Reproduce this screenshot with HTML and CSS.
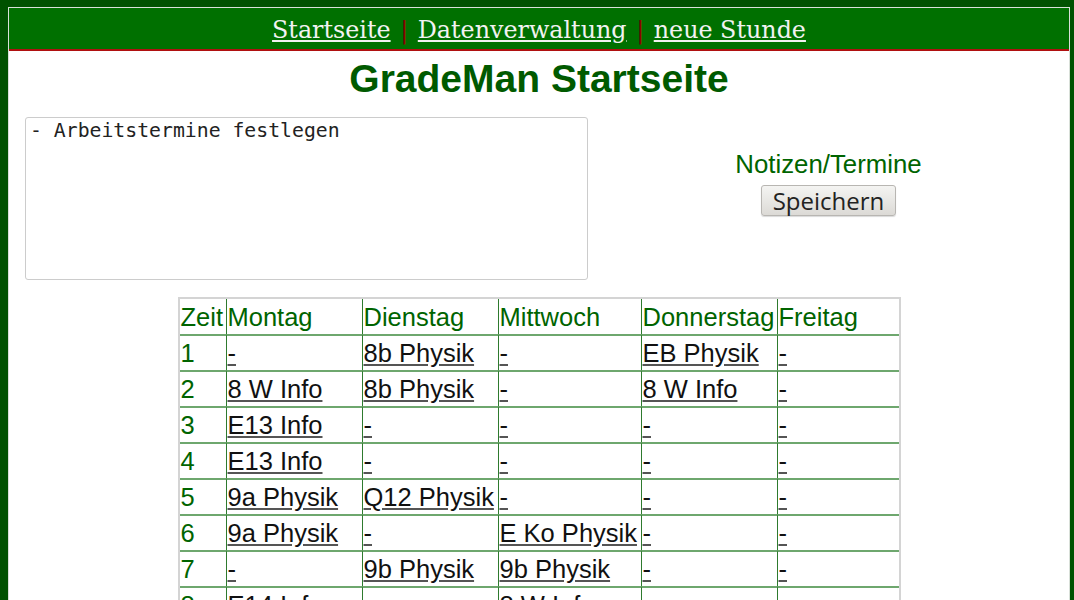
FILE: index.html
```html
<!DOCTYPE html>
<html lang="de">
<head>
  <meta charset="UTF-8">
  <title>GradeMan Startseite</title>
  <link rel="stylesheet" href="styles.css">
</head>
<body>

  <div class="page">
    <div class="nav">
      <a href="#">Startseite</a> <span class="sep">|</span>
      <a href="#">Datenverwaltung</a> <span class="sep">|</span>
      <a href="#">neue Stunde</a>
    </div>

    <h1>GradeMan Startseite</h1>

    <div class="notes">
      <textarea class="notes-text">- Arbeitstermine festlegen</textarea>
      <div class="notes-side">
        <div class="notes-label">Notizen/Termine</div>
        <button class="save">Speichern</button>
      </div>
    </div>

    <table class="plan">
      <thead>
        <tr>
          <th class="c-zeit">Zeit</th>
          <th class="c-mo">Montag</th>
          <th class="c-di">Dienstag</th>
          <th class="c-mi">Mittwoch</th>
          <th class="c-do">Donnerstag</th>
          <th class="c-fr">Freitag</th>
        </tr>
      </thead>
      <tbody>
        <tr><td class="zeit">1</td><td><a href="#">-</a></td><td><a href="#">8b Physik</a></td><td><a href="#">-</a></td><td><a href="#">EB Physik</a></td><td><a href="#">-</a></td></tr>
        <tr><td class="zeit">2</td><td><a href="#">8 W Info</a></td><td><a href="#">8b Physik</a></td><td><a href="#">-</a></td><td><a href="#">8 W Info</a></td><td><a href="#">-</a></td></tr>
        <tr><td class="zeit">3</td><td><a href="#">E13 Info</a></td><td><a href="#">-</a></td><td><a href="#">-</a></td><td><a href="#">-</a></td><td><a href="#">-</a></td></tr>
        <tr><td class="zeit">4</td><td><a href="#">E13 Info</a></td><td><a href="#">-</a></td><td><a href="#">-</a></td><td><a href="#">-</a></td><td><a href="#">-</a></td></tr>
        <tr><td class="zeit">5</td><td><a href="#">9a Physik</a></td><td><a href="#">Q12 Physik</a></td><td><a href="#">-</a></td><td><a href="#">-</a></td><td><a href="#">-</a></td></tr>
        <tr><td class="zeit">6</td><td><a href="#">9a Physik</a></td><td><a href="#">-</a></td><td><a href="#">E Ko Physik</a></td><td><a href="#">-</a></td><td><a href="#">-</a></td></tr>
        <tr><td class="zeit">7</td><td><a href="#">-</a></td><td><a href="#">9b Physik</a></td><td><a href="#">9b Physik</a></td><td><a href="#">-</a></td><td><a href="#">-</a></td></tr>
        <tr><td class="zeit">8</td><td><a href="#">E14 Info</a></td><td><a href="#">-</a></td><td><a href="#">8 W Info</a></td><td><a href="#">-</a></td><td><a href="#">-</a></td></tr>
      </tbody>
    </table>
  </div>

</body>
</html>
```

FILE: styles.css
```css
body {
  background: #005200;
  margin: 7px 4px 0 8px;
  font-family: "Liberation Sans", Arial, sans-serif;
}

.page {
  background: #fff;
  border-left: 1px solid #d8e0d8;
  border-right: 1px solid #d8e0d8;
  padding-bottom: 40px;
}

/* top navigation */
.nav {
  background: #007000;
  border-top: 1px solid #d8e0d8;
  border-bottom: 2px solid #b01010;
  height: 41px;
  line-height: 44px;
  text-align: center;
  font-family: "DejaVu Serif", serif;
  font-size: 23.8px;
  color: #eef;
}

.nav a {
  color: #f2f2f2;
}

.sep {
  color: #8a0000;
  padding: 0 2px;
}

h1 {
  margin: 7px 0 0;
  text-align: center;
  color: #005a00;
  font-size: 39px;
  line-height: 42px;
}

/* notes block */
.notes {
  display: flex;
  align-items: flex-start;
  padding: 17px 0 0 16px;
}

.notes-text {
  width: 563px;
  height: 163px;
  box-sizing: border-box;
  border: 1px solid #ccc;
  border-radius: 3px;
  padding: 1px 4px;
  font-family: "DejaVu Sans Mono", monospace;
  font-size: 19.8px;
  color: #222;
  resize: none;
}

.notes-side {
  flex: 1;
  text-align: center;
  padding-top: 33px;
}

.notes-label {
  color: #006400;
  font-size: 25.8px;
  line-height: 29px;
}

.save {
  margin-top: 6px;
  height: 31px;
  padding: 0 11px;
  font-family: "Open Sans", sans-serif;
  font-size: 24px;
  line-height: 27px;
  color: #222;
  background: linear-gradient(#f4f4f2, #dcdad6);
  border: 1px solid #b8b6b2;
  border-radius: 3px;
  box-shadow: 0 1px 1px rgba(0, 0, 0, 0.15);
}

/* timetable */
.plan {
  margin: 17px auto 0;
  border: 2px solid #d4d4d4;
  border-spacing: 0;
  font-size: 25.5px;
}

.plan th,
.plan td {
  box-sizing: border-box;
  padding: 1px 1px;
  height: 36px;
  line-height: 32px;
  text-align: left;
  font-weight: normal;
  white-space: nowrap;
  border-left: 1px solid #2e7a2e;
  border-top: 2px solid #6ea76e;
}

.plan th:first-child,
.plan td:first-child {
  border-left: none;
}

.plan thead th {
  border-top: none;
  height: 35px;
  color: #006400;
}

.plan .zeit {
  color: #006400;
}

.plan a {
  color: #111;
  text-decoration-color: #555;
}

.c-zeit { width: 46px; }
.c-mo { width: 136px; }
.c-di { width: 136px; }
.c-mi { width: 143px; }
.c-do { width: 136px; }
.c-fr { width: 122px; }
```
